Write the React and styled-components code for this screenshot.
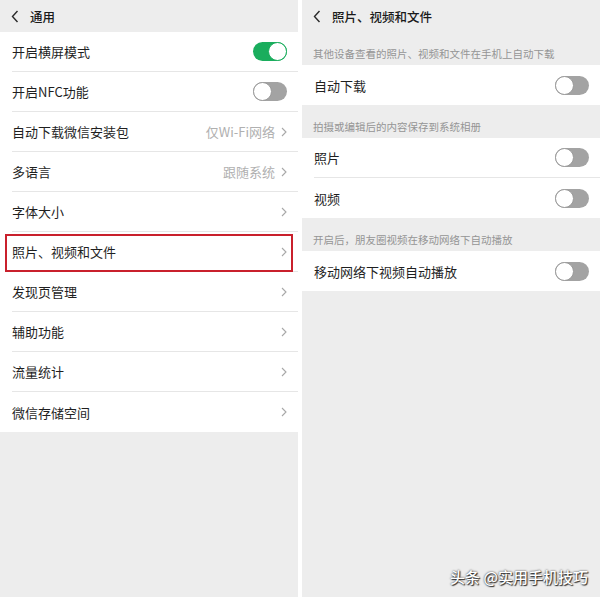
import React from "react";
import styled, { createGlobalStyle } from "styled-components";

const GlobalStyle = createGlobalStyle`
  html, body {
    margin: 0;
    background: #fff;
  }
  body {
    font-family: "Noto Sans CJK SC", "Noto Sans", "Liberation Sans", sans-serif;
    color: #1f1f1f;
  }
  * { box-sizing: border-box; }
`;

const generalItems = [
  { label: "开启横屏模式", toggle: true, on: true },
  { label: "开启NFC功能", toggle: true, on: false },
  { label: "自动下载微信安装包", value: "仅Wi-Fi网络" },
  { label: "多语言", value: "跟随系统" },
  { label: "字体大小" },
  { label: "照片、视频和文件", marked: true },
  { label: "发现页管理" },
  { label: "辅助功能" },
  { label: "流量统计" },
  { label: "微信存储空间" },
];

const mediaSections = [
  { note: "其他设备查看的照片、视频和文件在手机上自动下载", items: ["自动下载"] },
  { note: "拍摄或编辑后的内容保存到系统相册", items: ["照片", "视频"] },
  { note: "开启后，朋友圈视频在移动网络下自动播放", items: ["移动网络下视频自动播放"] },
];

const BackIcon = () => (
  <svg width="8" height="13" viewBox="0 0 8 13">
    <polyline points="6.5,1 1.5,6.5 6.5,12" fill="none" stroke="#2a2a2a" strokeWidth="1.4" />
  </svg>
);

const Chevron = () => (
  <svg width="6" height="10" viewBox="0 0 6 10">
    <polyline points="1,1 5,5 1,9" fill="none" stroke="#a8a8a8" strokeWidth="1.1" />
  </svg>
);

const Row = ({ item }) => (
  <Item $marked={item.marked}>
    <Label>{item.label}</Label>
    {item.value && <Value>{item.value}</Value>}
    {item.toggle ? (
      <Switch $on={item.on}><Knob $on={item.on} /></Switch>
    ) : (
      <Chevron />
    )}
  </Item>
);

const App = () => {
  return (
    <>
      <GlobalStyle />
      <Page>
        <Panel>
          <Header>
            <BackIcon />
            <Title>通用</Title>
          </Header>
          <Group>
            {generalItems.map((item) => (
              <Row key={item.label} item={item} />
            ))}
          </Group>
        </Panel>
        <Panel>
          <Header>
            <BackIcon />
            <Title>照片、视频和文件</Title>
          </Header>
          {mediaSections.map((section) => (
            <React.Fragment key={section.note}>
              <Note>{section.note}</Note>
              <Group>
                {section.items.map((label) => (
                  <Row key={label} item={{ label, toggle: true, on: false }} />
                ))}
              </Group>
            </React.Fragment>
          ))}
        </Panel>
        <Watermark>头条 @实用手机技巧</Watermark>
      </Page>
    </>
  );
};
export default App;

const Page = styled.div`
  position: relative;
  display: flex;
  gap: 4px;
  width: 600px;
  height: 597px;
`;

const Panel = styled.section`
  flex: 1;
  display: flex;
  flex-direction: column;
  background: #ededed;
`;

const Header = styled.header`
  height: 32px;
  flex-shrink: 0;
  display: flex;
  align-items: center;
  gap: 11px;
  padding-left: 11px;
`;

const Title = styled.h1`
  margin: 0;
  font-size: 12.5px;
  font-weight: 500;
  color: #1a1a1a;
`;

const Group = styled.div`
  background: #fff;
`;

const Item = styled.div`
  position: relative;
  height: 40px;
  margin-left: 12px;
  padding-right: 11px;
  display: flex;
  align-items: center;
  border-bottom: 1px solid #e6e6e6;
  &:last-child {
    border-bottom: none;
  }
  ${(p) =>
    p.$marked &&
    `
    &::after {
      content: "";
      position: absolute;
      top: 2px;
      bottom: -1px;
      left: -7px;
      right: 5px;
      border: 2.5px solid #c9202c;
    }
  `}
`;

const Label = styled.span`
  flex: 1;
  font-size: 13px;
  color: #1f1f1f;
`;

const Value = styled.span`
  font-size: 13px;
  color: #b0b0b0;
  margin-right: 6px;
`;

const Switch = styled.span`
  width: 34px;
  height: 19px;
  border-radius: 10px;
  display: flex;
  align-items: center;
  justify-content: ${(p) => (p.$on ? "flex-end" : "flex-start")};
  background: ${(p) => (p.$on ? "#1aad5d" : "#a3a3a3")};
`;

const Knob = styled.span`
  width: 19px;
  height: 19px;
  border-radius: 50%;
  background: #fff;
  border: 1.5px solid ${(p) => (p.$on ? "#1aad5d" : "#9a9a9a")};
`;

const Note = styled.div`
  height: 33px;
  flex-shrink: 0;
  display: flex;
  align-items: flex-end;
  padding: 0 0 4px 11px;
  font-size: 10.5px;
  color: #959595;
`;

const Watermark = styled.div`
  position: absolute;
  right: 12px;
  bottom: 10px;
  font-size: 15px;
  font-weight: 500;
  color: #fff;
  text-shadow: 0 0 2px #222, 1px 1px 1px #333;
`;
